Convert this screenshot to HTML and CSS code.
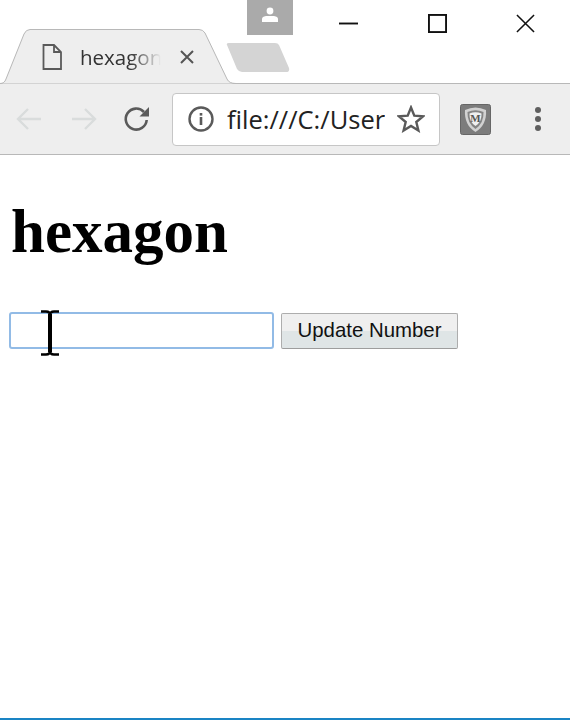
FILE: index.html
```html
<!DOCTYPE html>
<html lang="en">

<head>
    <meta charset="UTF-8">
    <meta name="viewport" content="width=device-width, initial-scale=1.0">
    <title>hexagon</title>
    <link rel="stylesheet" href="styles.css">
</head>

<body>

    <div class="tabstrip">
        <div class="tab">
            <svg class="tab-shape" width="236" height="55" viewBox="0 0 236 55">
                <path d="M0 54.5 C3 54.500 5 53 6 50 L24 5 Q26 .5 30 .5 L199 .5 Q203 .5 205 4 L227 50 Q229 54.5 236 54.5 Z" fill="#eeeeee" />
                <path d="M0 54.5 C3 54.500 5 53 6 50 L24 5 Q26 .5 30 .5 L199 .5 Q203 .5 205 4 L227 50 Q229 54.5 236 54.5" fill="none" stroke="#b8b8b8" />
            </svg>
            <svg class="tab-icon" width="22" height="28" viewBox="0 0 22 28">
                <path d="M2.5 2 H13 L20 9 V26 H2.5 Z M13 2 V9 H20" fill="none" stroke="#5a5a5a" stroke-width="1.8" />
            </svg>
            <span class="tab-title">hexagon</span>
            <svg class="tab-close" width="16" height="16" viewBox="0 0 16 16">
                <path d="M2 2 L14 14 M14 2 L2 14" stroke="#555" stroke-width="2" />
            </svg>
        </div>
        <svg class="new-tab" width="64" height="32" viewBox="0 0 64 32">
            <path d="M1 3 Q0 1 3 1 L49 1 Q52 1 53 3 L63 26 Q64 30 60 30 L16 30 Q13 30 11 27 Z" fill="#d4d4d4" />
        </svg>
        <div class="avatar">
            <svg width="16" height="16" viewBox="0 0 16 16">
                <circle cx="8" cy="4" r="3.4" fill="#fff" />
                <path d="M0 15 V12 Q0 9.500 4 9 H12 Q16 9.500 16 12 V15 Z" fill="#fff" />
            </svg>
        </div>
        <div class="window-controls">
            <svg width="19" height="19" viewBox="0 0 20 20">
                <path d="M0 10 H20" stroke="#111" stroke-width="2" />
            </svg>
            <svg width="19" height="19" viewBox="0 0 20 20">
                <rect x="1" y="1" width="18" height="18" fill="none" stroke="#111" stroke-width="2" />
            </svg>
            <svg width="19" height="19" viewBox="0 0 20 20">
                <path d="M1 1 L19 19 M19 1 L1 19" stroke="#111" stroke-width="1.6" />
            </svg>
        </div>
    </div>

    <div class="toolbar">
        <svg class="nav-icon" width="26" height="24" viewBox="0 0 26 24">
            <path d="M25 12 H2 M12 2 L2 12 L12 22" fill="none" stroke="#d9dcdc" stroke-width="2.4" />
        </svg>
        <svg class="nav-icon" width="26" height="24" viewBox="0 0 26 24">
            <path d="M1 12 H24 M14 2 L24 12 L14 22" fill="none" stroke="#d9dcdc" stroke-width="2.4" />
        </svg>
        <svg class="nav-icon" width="28" height="28" viewBox="0 0 28 28">
            <path d="M21 7 A10.500 10.500 0 1 0 23.700 15" fill="none" stroke="#5a5a5a" stroke-width="2.600" />
            <path d="M26 2 V11.500 H16.500 Z" fill="#5a5a5a" />
        </svg>
        <div class="omnibox">
            <svg width="26" height="26" viewBox="0 0 26 26">
                <circle cx="13" cy="13" r="11.500" fill="none" stroke="#5a5a5a" stroke-width="2.400" />
                <rect x="11.700" y="11" width="2.600" height="8" fill="#5a5a5a" />
                <rect x="11.700" y="7" width="2.600" height="2.600" fill="#5a5a5a" />
            </svg>
            <span class="url">file:///C:/User</span>
            <svg width="28" height="28" viewBox="0 0 28 28">
                <path d="M14 2.500 L17.300 10.700 L26 11.300 L19.300 17 L21.400 25.500 L14 20.900 L6.600 25.500 L8.700 17 L2 11.300 L10.700 10.700 Z" fill="none" stroke="#5a5a5a" stroke-width="2.400" />
            </svg>
        </div>
        <svg class="extension" width="31" height="31" viewBox="0 0 31 31">
            <rect x=".5" y=".5" width="30" height="30" rx="2" fill="#7c7c7c" stroke="#666" />
            <path d="M5 6 Q15.500 1 26 6 Q27 21 15.500 28 Q4 21 5 6 Z" fill="#d2d2d2" />
            <path d="M7.500 8 Q15.500 4.500 23.500 8 Q24 19 15.500 25 Q7 19 7.500 8 Z" fill="#858585" />
            <path d="M9.500 9.500 Q15.500 7 21.500 9.500 Q22 17.500 15.500 22 Q9 17.500 9.500 9.500 Z" fill="#f0f0f0" />
            <text x="15.500" y="18" class="extension-letter">M</text>
        </svg>
        <div class="menu-dots">
            <span class="dot"></span>
            <span class="dot"></span>
            <span class="dot"></span>
        </div>
    </div>

    <div class="page">
        <h1>hexagon</h1>
        <div class="number-form">
            <input class="number-input" type="text">
            <button class="update-btn">Update Number</button>
        </div>
        <!-- mouse cursor sitting over the input -->
        <svg class="ibeam" width="18" height="46" viewBox="0 0 18 46">
            <path d="M0 1.500 H5 Q9 1.500 9 5 Q9 1.500 13 1.500 H18 M0 44.500 H5 Q9 44.500 9 41 Q9 44.500 13 44.500 H18" fill="none" stroke="#000" stroke-width="2.600" />
            <rect x="7" y="4" width="4" height="38" fill="#000" />
        </svg>
    </div>

    <div class="bottom-line"></div>

</body>

</html>
```

FILE: styles.css
```css
body {
    font-family: "Liberation Serif", serif;
    margin: 0;
    padding: 0;
    height: 100vh;
    display: flex;
    flex-direction: column;
    background-color: #fff;
    overflow: hidden;
}

.tabstrip {
    display: flex;
    align-items: flex-start;
    height: 84px;
    box-sizing: border-box;
    border-bottom: 1px solid #b8b8b8;
    flex-shrink: 0;
}

.tab {
    position: relative;
    display: flex;
    align-items: center;
    width: 226px;
    height: 55px;
    margin-top: 29px;
    flex-shrink: 0;
}

.tab-shape {
    position: absolute;
    top: 0;
    left: 0;
}

.tab-icon {
    position: relative;
    margin-left: 41px;
}

.tab-title {
    position: relative;
    width: 81px;
    margin-left: 17px;
    overflow: hidden;
    font-family: "Open Sans", sans-serif;
    font-size: 20.500px;
    color: #333;
    -webkit-mask-image: linear-gradient(to right, #000 62%, transparent 100%);
    mask-image: linear-gradient(to right, #000 62%, transparent 100%);
}

.tab-close {
    position: relative;
    margin-left: 18px;
}

.new-tab {
    margin-top: 42px;
    flex-shrink: 0;
}

.avatar {
    display: flex;
    justify-content: center;
    align-items: flex-start;
    width: 46px;
    height: 35px;
    box-sizing: border-box;
    padding-top: 7px;
    margin-left: -43px;
    background-color: #aaaaaa;
    flex-shrink: 0;
}

.window-controls {
    display: flex;
    gap: 69.500px;
    margin-left: 46px;
    margin-top: 14px;
}

.toolbar {
    display: flex;
    align-items: center;
    height: 71px;
    box-sizing: border-box;
    padding-left: 16px;
    background-color: #eeeeee;
    border-bottom: 1px solid #b8b8b8;
    flex-shrink: 0;
}

.nav-icon {
    margin-right: 29px;
}

.nav-icon:nth-child(2) {
    margin-right: 26px;
}

.nav-icon:nth-child(3) {
    margin-right: 21px;
}

.omnibox {
    display: flex;
    align-items: center;
    width: 268px;
    height: 53px;
    box-sizing: border-box;
    padding-left: 15px;
    background-color: #fff;
    border: 1px solid #c6c6c6;
    border-radius: 4px;
}

.url {
    width: 158px;
    margin-left: 13px;
    margin-right: 12px;
    overflow: hidden;
    white-space: nowrap;
    font-family: "Open Sans", sans-serif;
    font-size: 25.500px;
    color: #222;
}

.extension {
    margin-left: 20px;
}

.extension-letter {
    font-family: "Liberation Serif", serif;
    font-size: 11px;
    font-weight: bold;
    text-anchor: middle;
    fill: #555;
}

.menu-dots {
    display: flex;
    flex-direction: column;
    gap: 3px;
    margin-left: 44px;
}

.dot {
    width: 6px;
    height: 6px;
    border-radius: 50%;
    background-color: #5f5f5f;
}

.page {
    position: relative;
    flex: 1;
    padding: 0 9px;
}

h1 {
    margin: 42px 0 45px 2px;
    font-size: 61px;
    line-height: 70px;
    font-weight: bold;
    color: #000;
}

.number-form {
    display: flex;
    align-items: center;
    gap: 7px;
}

.number-input {
    width: 265px;
    height: 37px;
    box-sizing: border-box;
    padding: 0 6px;
    border: 2px solid #92bbe6;
    border-radius: 3px;
    background-color: #fff;
    outline: none;
}

.update-btn {
    width: 177px;
    height: 36px;
    padding: 0;
    font-family: "Liberation Sans", Arial, sans-serif;
    font-size: 20.400px;
    color: #111;
    background: linear-gradient(to bottom, #efefef 50%, #dfe5e6 50%);
    border: 1px solid #adadad;
    border-bottom-color: #9d9d9d;
    border-radius: 2px;
}

.ibeam {
    position: absolute;
    left: 41px;
    top: 155px;
}

.bottom-line {
    height: 2px;
    background-color: #1a84c4;
    flex-shrink: 0;
}
```
